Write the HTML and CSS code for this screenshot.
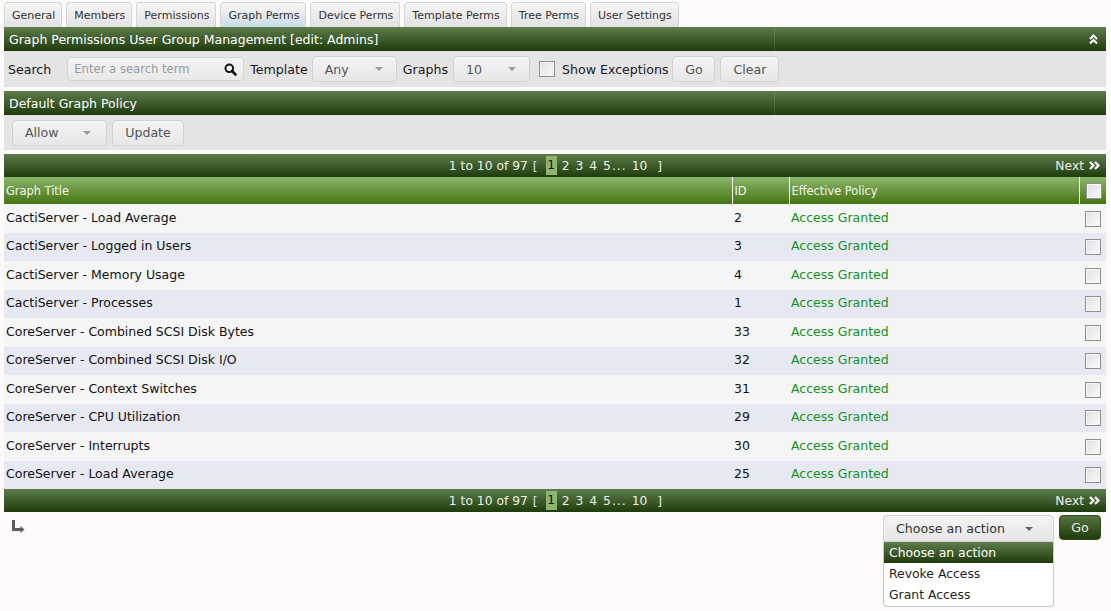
FILE: index.html
```html
<!DOCTYPE html>
<html>
<head>
<meta charset="utf-8">
<link rel="stylesheet" href="styles.css">
</head>
<body>
<div class="page">
  <div class="tabs">
    <div class="tab">General</div>
    <div class="tab">Members</div>
    <div class="tab">Permissions</div>
    <div class="tab active">Graph Perms</div>
    <div class="tab">Device Perms</div>
    <div class="tab">Template Perms</div>
    <div class="tab">Tree Perms</div>
    <div class="tab">User Settings</div>
  </div>

  <div class="titlebar">
    <div class="tcell main">Graph Permissions User Group Management [edit: Admins]</div>
    <div class="tcell side">
      <svg class="collapse" width="9" height="11" viewBox="0 0 9 11"><path d="M1 5 L4.5 1.5 L8 5 M1 9.5 L4.5 6 L8 9.5" fill="none" stroke="#fff" stroke-width="2"/></svg>
    </div>
  </div>
  <div class="filter">
    <span class="lbl">Search</span>
    <div class="search"><span class="ph">Enter a search term</span>
      <svg width="13" height="13" viewBox="0 0 13 13"><circle cx="5.3" cy="5.3" r="3.8" fill="none" stroke="#111" stroke-width="2"/><path d="M8 8 L11.5 11.5" stroke="#111" stroke-width="2.6" stroke-linecap="round"/></svg>
    </div>
    <span class="lbl">Template</span>
    <div class="sel w-tpl"><span>Any</span><i class="caret"></i></div>
    <span class="lbl">Graphs</span>
    <div class="sel w-gr"><span>10</span><i class="caret"></i></div>
    <span class="cb big"></span>
    <span class="lbl">Show Exceptions</span>
    <div class="btn w-go">Go</div>
    <div class="btn w-clear">Clear</div>
  </div>

  <div class="titlebar gap">
    <div class="tcell main">Default Graph Policy</div>
    <div class="tcell side"></div>
  </div>
  <div class="filter policy">
    <div class="sel w-allow"><span>Allow</span><i class="caret"></i></div>
    <div class="btn w-upd">Update</div>
  </div>

  <div class="navbar first">
    <div class="navc"><span>1 to 10 of 97</span><span class="br">[</span><span class="cur">1</span><span class="pg p1">2</span><span class="pg">3</span><span class="pg">4</span><span class="pg">5</span><span class="dots">...</span><span class="pg p10">10</span><span class="br2">]</span></div>
    <div class="next">Next<svg class="dbl" width="11" height="9" viewBox="0 0 11 9"><path d="M1 1 L4.5 4.5 L1 8 M6 1 L9.5 4.5 L6 8" fill="none" stroke="#fff" stroke-width="2.2"/></svg></div>
  </div>
  <table class="grid">
    <colgroup><col class="c1"><col class="c2"><col class="c3"><col class="c4"></colgroup>
    <thead>
      <tr><th>Graph Title</th><th>ID</th><th>Effective Policy</th><th class="ck"><span class="cb hd"></span></th></tr>
    </thead>
    <tbody>
      <tr><td>CactiServer - Load Average</td><td>2</td><td class="ok">Access Granted</td><td class="ck"><span class="cb"></span></td></tr>
      <tr><td>CactiServer - Logged in Users</td><td>3</td><td class="ok">Access Granted</td><td class="ck"><span class="cb"></span></td></tr>
      <tr><td>CactiServer - Memory Usage</td><td>4</td><td class="ok">Access Granted</td><td class="ck"><span class="cb"></span></td></tr>
      <tr><td>CactiServer - Processes</td><td>1</td><td class="ok">Access Granted</td><td class="ck"><span class="cb"></span></td></tr>
      <tr><td>CoreServer - Combined SCSI Disk Bytes</td><td>33</td><td class="ok">Access Granted</td><td class="ck"><span class="cb"></span></td></tr>
      <tr><td>CoreServer - Combined SCSI Disk I/O</td><td>32</td><td class="ok">Access Granted</td><td class="ck"><span class="cb"></span></td></tr>
      <tr><td>CoreServer - Context Switches</td><td>31</td><td class="ok">Access Granted</td><td class="ck"><span class="cb"></span></td></tr>
      <tr><td>CoreServer - CPU Utilization</td><td>29</td><td class="ok">Access Granted</td><td class="ck"><span class="cb"></span></td></tr>
      <tr><td>CoreServer - Interrupts</td><td>30</td><td class="ok">Access Granted</td><td class="ck"><span class="cb"></span></td></tr>
      <tr><td>CoreServer - Load Average</td><td>25</td><td class="ok">Access Granted</td><td class="ck"><span class="cb"></span></td></tr>
    </tbody>
  </table>
  <div class="navbar">
    <div class="navc"><span>1 to 10 of 97</span><span class="br">[</span><span class="cur">1</span><span class="pg p1">2</span><span class="pg">3</span><span class="pg">4</span><span class="pg">5</span><span class="dots">...</span><span class="pg p10">10</span><span class="br2">]</span></div>
    <div class="next">Next<svg class="dbl" width="11" height="9" viewBox="0 0 11 9"><path d="M1 1 L4.5 4.5 L1 8 M6 1 L9.5 4.5 L6 8" fill="none" stroke="#fff" stroke-width="2.2"/></svg></div>
  </div>

  <div class="actions">
    <svg class="ret" width="13" height="14" viewBox="0 0 13 14"><path d="M0 0 H3 V8 H8.5 V6 L12.5 9.5 L8.5 13 V11 H0 Z" fill="#5e5e5e"/></svg>
    <div class="actright">
      <div class="actwrap">
        <div class="sel open w-act"><span>Choose an action</span><i class="caret dark"></i></div>
        <div class="menu">
          <div class="mi hl">Choose an action</div>
          <div class="mi">Revoke Access</div>
          <div class="mi">Grant Access</div>
        </div>
      </div>
      <div class="gobtn">Go</div>
    </div>
  </div>
</div>
</body>
</html>
```
FILE: styles.css
```css
* { box-sizing: border-box; }
html, body { margin: 0; padding: 0; }
body {
  background: #fefaf9;
  font-family: "DejaVu Sans", Verdana, sans-serif;
  font-size: 12px;
  color: #1a1a1a;
  min-height: 611px;
}
.page { padding: 2px 5px 0 4px; width: 1111px; }

.tabs { display: flex; gap: 4px; height: 25px; }
.tab {
  height: 25px;
  padding: 0 6px 0 7px;
  line-height: 25px;
  font-size: 11px;
  color: #333;
  border: 1px solid #d6d6d6;
  border-bottom: none;
  border-radius: 4px 4px 0 0;
  background: linear-gradient(#f6f6f6, #e2e2e2);
}
.tab.active { background: linear-gradient(#f2f2f2 20%, #c9dde8); }

.titlebar {
  display: flex;
  height: 24px;
  background: linear-gradient(#5e7d4b, #1f3b0c);
  color: #fff;
  font-size: 12.5px;
}
.titlebar.gap { margin-top: 4px; }
.tcell { display: flex; align-items: center; }
.tcell.main { width: 771px; padding-left: 5px; border-right: 1px solid rgba(255,255,255,0.12); }
.tcell.side { flex: 1; justify-content: flex-end; padding-right: 8px; }

.filter {
  display: flex;
  align-items: center;
  height: 36px;
  background: #e4e4e4;
  padding-left: 4px;
  font-size: 12.6px;
}
.filter.policy { height: 35px; padding-left: 8px; }
.lbl { color: #1a1a1a; margin-right: 4px; }
.search {
  width: 177px; height: 24px;
  margin-left: 12px; margin-right: 6px;
  border: 1px solid #d4d4d4; border-radius: 4px;
  background: linear-gradient(#f2f2f2, #e9e9e9);
  display: flex; align-items: center; justify-content: space-between;
  padding: 0 6px 0 6px;
}
.ph { color: #9a9a9a; font-size: 11.6px; }
.sel {
  height: 26px;
  border: 1px solid #d2d2d2; border-radius: 4px;
  background: linear-gradient(#f4f4f4, #e6e6e6);
  display: flex; align-items: center; justify-content: space-between;
  padding: 0 13px 0 12px;
  color: #555;
  font-size: 12.6px;
}
.caret { width: 0; height: 0; border-left: 4px solid transparent; border-right: 4px solid transparent; border-top: 4px solid #9a9a9a; }
.caret.dark { border-top-color: #666; }
.w-tpl { width: 85px; margin-right: 6px; }
.w-gr { width: 77px; margin-left: 1px; margin-right: 9px; }
.btn {
  height: 26px;
  border: 1px solid #d2d2d2; border-radius: 4px;
  background: linear-gradient(#f4f4f4, #e6e6e6);
  display: flex; align-items: center; justify-content: center;
  color: #555;
  font-size: 12.6px;
}
.w-go { width: 43px; }
.w-clear { width: 59px; margin-left: 5px; }
.w-allow { width: 95px; padding-left: 12px; padding-right: 15px; }
.w-upd { width: 72px; margin-left: 5px; }

.cb {
  display: inline-block;
  width: 16px; height: 16px;
  border: 1px solid #8f8f8f;
  background: linear-gradient(135deg, #e0e0e0, #fafafa);
  box-shadow: inset 0 0 0 1px #f6f6f6;
}
.cb.big { margin-right: 7px; }

.navbar {
  position: relative;
  height: 23px;
  background: linear-gradient(#5e7d4b, #1f3b0c);
  color: #eef0e6;
  font-size: 12.3px;
  display: flex; align-items: center; justify-content: center;
}
.navbar.first { margin-top: 4px; }
.navc { display: flex; align-items: center; padding-left: 1px; }
.br { color: #cfe0ff; margin-left: 5px; }
.cur { display: inline-block; background: #8fb46f; color: #111; padding: 0 1.6px; line-height: 19px; margin-left: 8px; }
.pg { margin-left: 6px; }
.pg.p1 { margin-left: 5px; }
.dots { margin-left: 1px; letter-spacing: 1px; }
.pg.p10 { margin-left: 5px; }
.br2 { margin-left: 10px; }
.next { position: absolute; right: 6px; top: 0; height: 23px; display: flex; align-items: center; gap: 5px; }
.dbl { display: block; }

.grid { width: 1102px; border-collapse: collapse; table-layout: fixed; }
.c1 { width: 728px; } .c2 { width: 57px; } .c3 { width: 290px; } .c4 { width: 27px; }
.grid th {
  height: 27px;
  background: linear-gradient(#8cb66c, #447512);
  color: #f2f6ea;
  font-weight: normal;
  text-align: left;
  font-size: 11.4px;
  padding: 0 0 0 2px;
  border-left: 1px solid #fff;
}
.grid th:first-child { border-left: none; }
.grid td { height: 28.5px; padding: 0 0 2px 2px; font-size: 12.5px; color: #111; }
.grid tbody tr:nth-child(odd) td { background: #f5f5f5; }
.grid tbody tr:nth-child(even) td { background: #e6e9f2; }
.grid td.ok { color: #16901c; }
.grid .ck { text-align: left; padding: 0 0 0 6px; }
.grid .ck .cb { vertical-align: middle; }

.actions { display: flex; justify-content: space-between; align-items: flex-start; padding-top: 3px; }
.ret { margin-left: 8px; margin-top: 5px; }
.actright { display: flex; align-items: flex-start; gap: 5px; margin-right: 5px; }
.actwrap { display: flex; flex-direction: column; width: 171px; }
.w-act { width: 171px; height: 27px; padding: 0 20px 0 12px; color: #333; }
.sel.open { border-radius: 4px 4px 0 0; }
.menu {
  width: 171px;
  border: 1px solid #c8c8c8; border-top: none;
  border-radius: 0 0 4px 4px;
  background: #fff;
  font-size: 12.4px;
  padding-bottom: 1px;
}
.mi { height: 21px; line-height: 21px; padding-left: 5px; color: #222; }
.mi.hl { background: linear-gradient(#5e7d4b, #1f3b0c); color: #fff; }
.gobtn {
  width: 42px; height: 25px;
  border-radius: 4px;
  background: linear-gradient(#56743f, #1f3b0c);
  border: 1px solid #2c4818;
  color: #eef0e6;
  font-size: 12.6px;
  display: flex; align-items: center; justify-content: center;
}
```
